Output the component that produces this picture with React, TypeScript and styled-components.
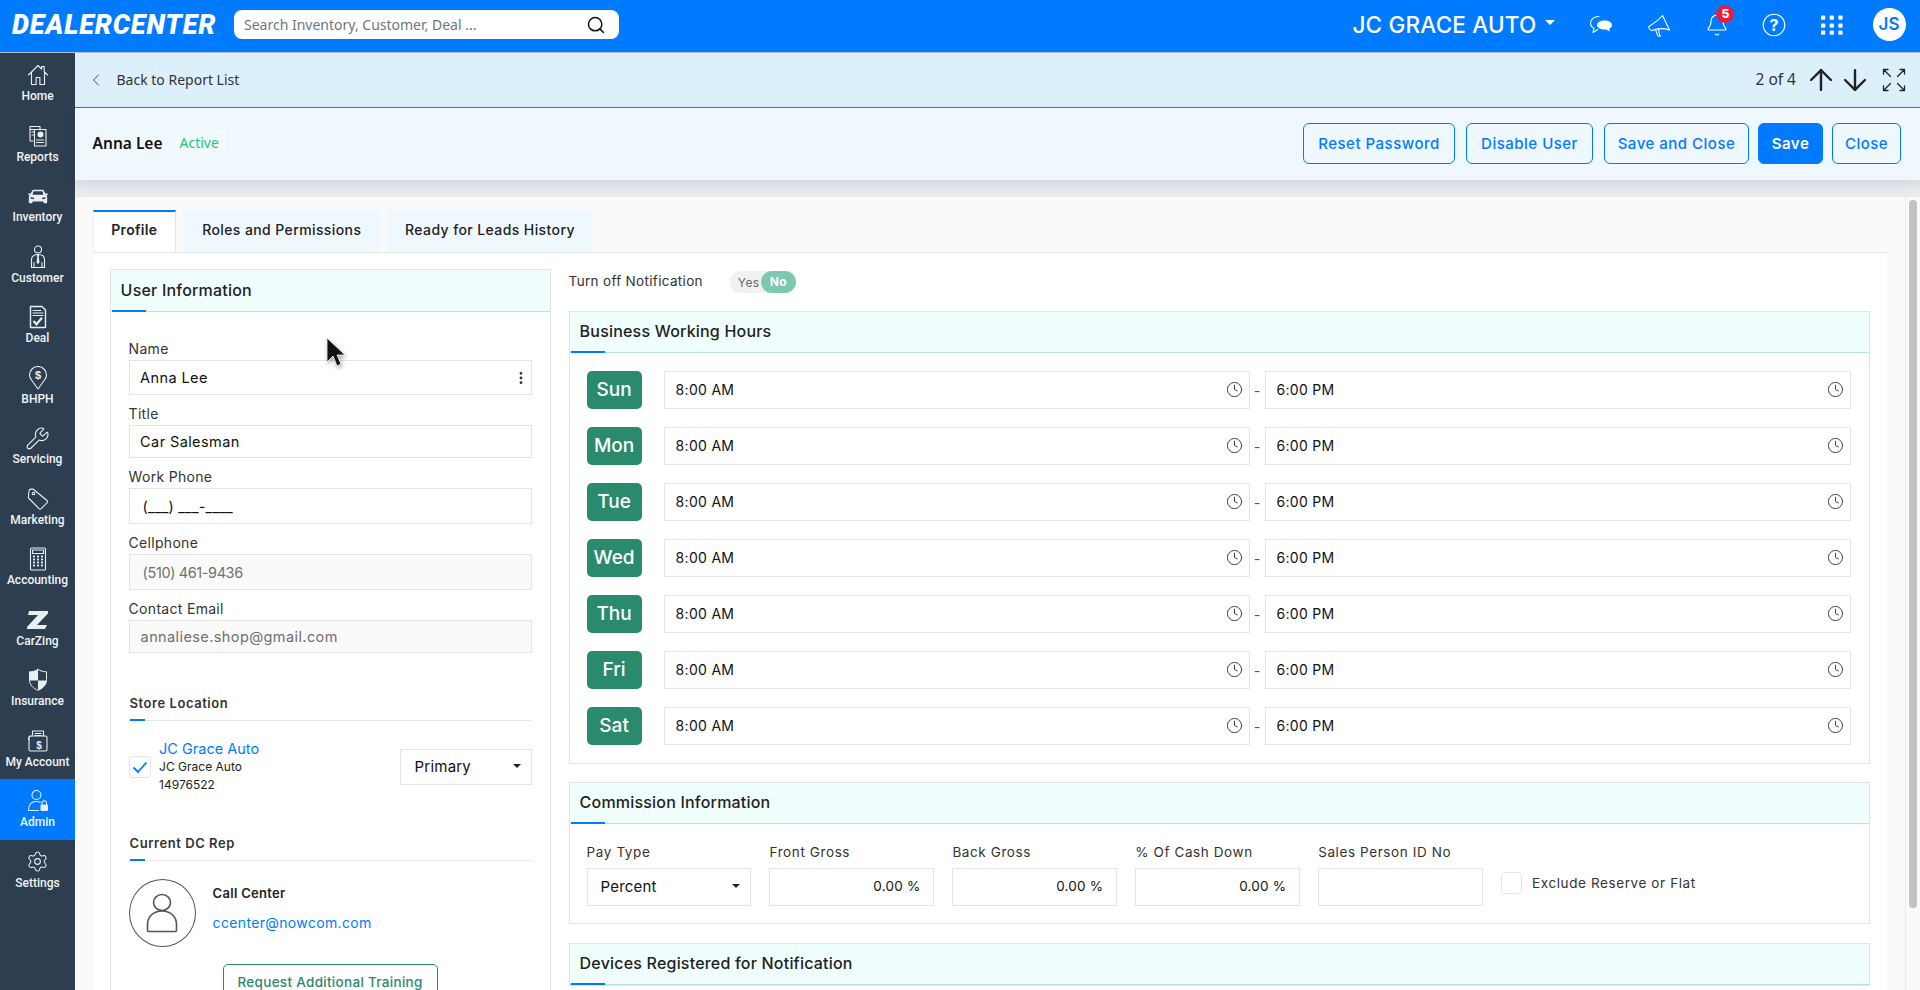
import { FC, ReactNode } from "react";
import styled, { createGlobalStyle } from "styled-components";
import {
  ArrowDown,
  ArrowUp,
  Bell,
  ChevronLeft,
  Clock,
  EllipsisVertical,
  Search,
  Settings,
  Wrench,
} from "lucide-react";

const formFont = `"Inter", "Liberation Sans", sans-serif`;
const textFont = `"Noto Sans", "Open Sans", sans-serif`;

const GlobalStyle = createGlobalStyle`
  html, body { margin: 0; padding: 0; height: 100%; background: #fff; }
  #root { height: 100%; }
  * { box-sizing: border-box; }
`;

const line = { fill: "none", stroke: "currentColor", strokeWidth: 1.1, strokeLinejoin: "round", strokeLinecap: "round" } as const;

const HomeIcon = () => (
  <svg width="24" height="22" viewBox="0 0 24 22">
    <path {...line} d="M2.500 11 12 1.500l3.600 3.600V2.600h2.600v5.100L21.500 11M5.500 8.500V20.500h4.600v-7h3.800v7h4.600V8.500" />
  </svg>
);
const ReportsIcon = () => (
  <svg width="24" height="22" viewBox="0 0 24 22">
    <path {...line} d="M4 1.500h10v3H4zM4 1.500v14.500h3M6 7h3M6 10h2" />
    <path {...line} fill="#2d3e50" d="M8.500 4.500h11.500v16.500h-11.500z" />
    <circle cx="14.500" cy="9.500" r="3" fill="currentColor" />
    <path {...line} d="M10.500 15h7M10.500 17.500h7" />
  </svg>
);
const CarIcon = () => (
  <svg width="22" height="15" viewBox="0 0 24 20" preserveAspectRatio="none">
    <path
      fill="currentColor"
      d="M5.600 2.200C6 1.300 6.800 1 7.600 1h8.800c.8 0 1.600.3 2 1.200L20 6h2c.5 0 .9.500.7 1l-.3 1-1.400.2c.6.600 1 1.300 1 2.300V18c0 .6-.4 1-1 1h-2c-.6 0-1-.4-1-1v-1.500H6V18c0 .6-.4 1-1 1H3c-.6 0-1-.4-1-1v-7.500c0-1 .4-1.700 1-2.300L1.600 8l-.3-1c-.2-.5.2-1 .7-1h2zM7.200 3 6 7.500h12L16.800 3zM4 10.500v2.500l3.500.6V11.500zm16 0-3.500 1v2.100L20 13z"
    />
  </svg>
);
const CustomerIcon = () => (
  <svg width="24" height="24" viewBox="0 0 24 24">
    <circle {...line} cx="12" cy="4.500" r="3.500" />
    <path {...line} d="M5.500 22.500v-8c0-3 2.500-5 6.500-5s6.500 2 6.500 5v8zM8 22.500v-5M16 22.500v-5" />
    <path fill="currentColor" d="M11.300 9.500h1.400l.5 1.500-.5.800.8 5.500-1.500 2-1.500-2 .8-5.500-.5-.8z" />
  </svg>
);
const DealIcon = () => (
  <svg width="24" height="24" viewBox="0 0 24 24">
    <path {...line} strokeWidth={1.4} d="M4.500 1.500h11.500l3.500 3.500v17.500h-15z" />
    <path {...line} d="M7 5.500h8M7 8h10M7 10.500h10" />
    <path fill="none" stroke="currentColor" strokeWidth="2.200" d="m7.500 16 3 3.300 5.500-6.500" />
  </svg>
);
const PinIcon = () => (
  <svg width="24" height="24" viewBox="0 0 24 24">
    <path {...line} d="M12 23 5.500 14C4 12 3.500 10.500 3.500 9a8.500 8.500 0 0 1 17 0c0 1.500-.5 3-2 5z" />
    <text x="12" y="13" textAnchor="middle" fontSize="11" fontWeight="700" fontFamily="Liberation Sans, sans-serif" fill="currentColor">
      $
    </text>
  </svg>
);
const TagIcon = () => (
  <svg width="24" height="24" viewBox="0 0 24 24">
    <path {...line} d="M7 2 21 13.500c.8.7.8 1.500.2 2.200l-6 6c-.7.7-1.500.7-2.200 0L3 11.500c-.5-.5-.7-1-.6-1.700L3 4.200c0-1 .8-2 1.800-2.100z" />
    <circle {...line} cx="7.500" cy="6.500" r="1.300" />
  </svg>
);
const CalcIcon = () => (
  <svg width="24" height="24" viewBox="0 0 24 24">
    <rect {...line} x="4.500" y="1" width="15" height="22" rx="1" />
    <rect {...line} x="6.500" y="3" width="11" height="3.500" />
    {[9.500, 12.500, 15.500, 18.500].map((y) =>
      [8, 12, 16].map((x) => <rect key={`${x}-${y}`} x={x - 1} y={y - 0.900} width="2" height="1.800" fill="currentColor" />)
    )}
  </svg>
);
const ZIcon = () => (
  <svg width="24" height="20" viewBox="0 0 24 20">
    <polygon fill="currentColor" points="3,1 22,1 22,3.500 11,15 21,15 19,19 1,19 1,17 12,5 2,5" />
  </svg>
);
const ShieldIcon = () => (
  <svg width="24" height="24" viewBox="0 0 24 24">
    <path {...line} strokeWidth={1} d="M12 1.500c2.500 1.500 5.500 2.300 8.500 2.300v8c0 5-3.500 8.500-8.500 10.500-5-2-8.500-5.500-8.500-10.500v-8c3 0 6-.8 8.500-2.300z" />
    <path fill="currentColor" d="M12 1.500v11H3.500V3.800c3 0 6-.8 8.500-2.300zM12 12.500h8.500c-.4 4.700-3.800 7.900-8.500 9.800z" />
  </svg>
);
const AccountIcon = () => (
  <svg width="24" height="24" viewBox="0 0 24 24">
    <path {...line} d="M6.500 6V2h11v5M9 4.500h6M9 6.500h6" />
    <rect {...line} x="3" y="7" width="18" height="15" rx="1.500" />
    <path {...line} d="M3 11c-.8-1.500-.5-4 2-4" />
    <text x="13" y="19.500" textAnchor="middle" fontSize="10" fontWeight="700" fontFamily="Liberation Sans, sans-serif" fill="currentColor">
      $
    </text>
  </svg>
);
const AdminIcon = () => (
  <svg width="24" height="24" viewBox="0 0 24 24">
    <circle {...line} cx="10.500" cy="6" r="4.500" />
    <path {...line} d="M2.500 21.500c0-6 3-9 8-9 1.500 0 2.800.3 3.800.8M2.500 21.500h10" />
    <rect x="14.500" y="15.500" width="7.500" height="6.500" rx="1" fill="currentColor" />
    <path {...line} d="M16 15.500V14a2.200 2.200 0 0 1 4.500 0v1.500" />
  </svg>
);
const ChatIcon = () => (
  <svg width="24" height="20" viewBox="0 0 24 20">
    <path {...line} d="M10 1.500C5 1.500 1.500 4.300 1.500 8c0 2.300 1.300 4.200 3.500 5.300L4 17.500l5-3.200" />
    <path fill="currentColor" d="M15.500 5.500c4.300 0 7.500 1.900 7.500 4.600 0 1.600-1.100 3-2.800 3.800l.6 2.600-3.500-2c-5.300.5-9.300-1.500-9.300-4.400 0-2.700 3.200-4.600 7.500-4.600z" />
  </svg>
);
const MegaphoneIcon = () => (
  <svg width="24" height="24" viewBox="0 0 24 24">
    <path {...line} d="M15.500 2.500C13.500 5 9 9 2.500 13c-1 .6-.8 2 0 2.700l1 1.300c.6.7 1.300.6 2 .3C10 15.500 16 15 22.500 17z" />
    <path {...line} d="m8.500 16.500 2 5.500c.3.800 1.500 1.300 3 1l-1-1.500-1-5.500" />
  </svg>
);
const HelpIcon = () => (
  <svg width="24" height="24" viewBox="0 0 24 24">
    <circle {...line} cx="12" cy="12" r="10.800" />
    <text x="12" y="17.500" textAnchor="middle" fontSize="16" fontWeight="700" fontFamily="Inter, sans-serif" fill="currentColor">
      ?
    </text>
  </svg>
);
const GridIcon = () => (
  <svg width="22" height="20" viewBox="0 0 22 20">
    {[0.500, 8.500, 15.500].map((y) =>
      [0, 8.700, 17.400].map((x) => <rect key={`${x}-${y}`} x={x} y={y} width="4.200" height="4.200" rx="1" fill="currentColor" />)
    )}
  </svg>
);
const ExpandIcon = () => (
  <svg width="24" height="24" viewBox="0 0 24 24">
    <path {...line} strokeWidth={1.300} d="M1.500 1.500 8.500 8.500M1.500 6V1.500H6M22.500 1.500 15.500 8.500M22.500 6V1.500H18M1.500 22.500 8.500 15.500M1.500 18v4.500H6M22.500 22.500 15.500 15.500M22.500 18v4.500H18" />
  </svg>
);
const PersonIcon = () => (
  <svg width="34" height="42" viewBox="0 0 34 42">
    <ellipse cx="17" cy="10.500" rx="8.500" ry="8" fill="none" stroke="#555" strokeWidth="1.600" />
    <path fill="none" stroke="#555" strokeWidth="1.600" strokeLinejoin="round" d="M2.500 38.500v-6c0-8 6-13.500 14.500-13.500s14.500 5.500 14.500 13.500v6c0 .5-.5 1-1 1h-27c-.5 0-1-.5-1-1z" />
  </svg>
);

const Page = styled.div`
  position: relative;
  display: flex;
  flex-direction: column;
  width: 100%;
  height: 100vh;
  overflow: hidden;
  font-family: ${formFont};
  color: #222;
`;

const TopBar = styled.header`
  flex: 0 0 53px;
  display: flex;
  align-items: center;
  padding-bottom: 3px;
  background: #007bff;
  border-bottom: 1px solid #b4bec8;
  color: #fff;
`;

const Logo = styled.div`
  flex: 0 0 204px;
  min-width: 0;
  margin-left: 12px;
  font-family: "Roboto", sans-serif;
  font-size: 27px;
  font-weight: 900;
  font-style: italic;
  letter-spacing: 0.900px;
  white-space: nowrap;
`;

const SearchBox = styled.div`
  display: flex;
  align-items: center;
  justify-content: space-between;
  width: 385px;
  height: 29px;
  margin-left: 18px;
  padding: 0 13px 0 10px;
  border-radius: 8px;
  background: #fff;
  font-family: ${textFont};
  font-size: 14px;
  color: #6c7780;
`;

const StoreSwitch = styled.div`
  display: flex;
  align-items: center;
  margin-left: auto;
  font-size: 22.500px;
  font-weight: 500;
  letter-spacing: 0.200px;
  white-space: nowrap;
`;

const Caret = styled.span<{ $size?: number; $color?: string }>`
  display: inline-block;
  width: 0;
  height: 0;
  border-left: ${(p) => p.$size ?? 5}px solid transparent;
  border-right: ${(p) => p.$size ?? 5}px solid transparent;
  border-top: ${(p) => p.$size ?? 5}px solid ${(p) => p.$color ?? "#fff"};
`;

const StoreCaret = styled(Caret)`
  margin: 0 18px 4px 8px;
`;

const TopIcon = styled.div`
  position: relative;
  flex: 0 0 57.600px;
  display: flex;
  align-items: center;
  justify-content: center;
`;

const Badge = styled.span`
  position: absolute;
  top: -8px;
  right: 11px;
  width: 18px;
  height: 18px;
  border-radius: 50%;
  background: #ee1c3c;
  font-size: 12px;
  font-weight: 800;
  line-height: 18px;
  text-align: center;
  color: #fff;
`;

const UserBadge = styled.div`
  flex: 0 0 33px;
  height: 33px;
  margin: 0 14.500px 0 12px;
  border-radius: 50%;
  background: #fff;
  font-size: 17px;
  font-weight: 600;
  line-height: 33px;
  text-align: center;
  color: #007bff;
`;

const Body = styled.div`
  flex: 1;
  display: flex;
  min-height: 0;
`;

const Sidebar = styled.nav`
  flex: 0 0 75px;
  background: #2d3e50;
`;

const NavItem = styled.div<{ $active?: boolean }>`
  display: flex;
  flex-direction: column;
  align-items: center;
  height: 60.500px;
  padding-top: 10px;
  background: ${(p) => (p.$active ? "#007bff" : "transparent")};
  color: #e9eef2;
`;

const NavIcon = styled.div`
  display: flex;
  align-items: center;
  justify-content: center;
  height: 24px;
`;

const NavLabel = styled.span`
  margin-top: 2px;
  font-family: "Roboto", sans-serif;
  font-size: 12px;
  font-weight: 500;
  line-height: 14px;
  white-space: nowrap;
  color: #f1f4f6;
`;

const Main = styled.main`
  flex: 1;
  display: flex;
  flex-direction: column;
  min-width: 0;
  background: #e9ecef;
`;

const SubBar = styled.div`
  flex: 0 0 55px;
  display: flex;
  align-items: center;
  padding: 0 12px 0 11px;
  background: #dcf0fc;
  border-bottom: 1px solid #1e80e6;
  font-family: ${textFont};
  font-size: 14px;
  color: #333;
`;

const BackLabel = styled.span`
  margin: 0 0 2px 10.500px;
`;

const Pager = styled.span`
  margin: 0 8px 2px auto;
  font-size: 15.500px;
`;

const PagerButton = styled.span`
  display: flex;
  width: 34px;
  justify-content: center;
  color: #222;
`;

const ExpandButton = styled(PagerButton)`
  margin-left: 8px;
  width: 28px;
`;

const DetailHead = styled.div`
  position: relative;
  z-index: 1;
  flex: 0 0 72px;
  display: flex;
  align-items: center;
  padding: 0 19px 1px 17.600px;
  background: #f0f8ff;
  box-shadow: 0 4px 10px rgba(40, 50, 60, 0.12);
`;

const PersonName = styled.span`
  margin-bottom: 2px;
  font-family: ${textFont};
  font-size: 15.500px;
  font-weight: 600;
  color: #111;
`;

const Status = styled.span`
  margin: 0 0 2px 10px;
  padding: 3px 7px;
  border-radius: 3px;
  background: #f2fbf9;
  font-family: ${textFont};
  font-size: 14px;
  color: #1cc67c;
`;

const Actions = styled.div`
  display: flex;
  margin-left: auto;
`;

const ActionButton = styled.button<{ $w: number; $ml?: number; $primary?: boolean }>`
  width: ${(p) => p.$w}px;
  height: 41px;
  margin-left: ${(p) => p.$ml ?? 0}px;
  padding: 0;
  border: 1px solid #007bff;
  border-radius: 6px;
  background: ${(p) => (p.$primary ? "#007bff" : "transparent")};
  font-family: ${formFont};
  font-size: 15px;
  font-weight: ${(p) => (p.$primary ? 600 : 500)};
  letter-spacing: 0.500px;
  color: ${(p) => (p.$primary ? "#fff" : "#007bff")};
`;

const ContentArea = styled.div`
  flex: 1;
  display: flex;
  min-height: 0;
  margin-top: 17px;
`;

const ContentBody = styled.div`
  flex: 1;
  display: flex;
  flex-direction: column;
  min-width: 0;
  padding: 13px 18px 0 17.600px;
  background: #fafafa;
`;

const ScrollTrack = styled.div`
  flex: 0 0 15px;
  padding: 3px 3px 0 3.500px;
  background: #fafafa;
  border-left: 1px solid #e8e8e8;
`;

const ScrollThumb = styled.div`
  width: 8px;
  height: 708px;
  border-radius: 4px;
  background: #c2c2c2;
`;

const Tabs = styled.div`
  flex: 0 0 42px;
  display: flex;
  gap: 7px;
  border-bottom: 1px solid #e0e5e9;
`;

const TabItem = styled.div<{ $active?: boolean; $w: number }>`
  flex: 0 0 ${(p) => p.$w}px;
  height: ${(p) => (p.$active ? "42px" : "41px")};
  border-top: 2px solid ${(p) => (p.$active ? "#007bff" : "#f0f8ff")};
  border-left: ${(p) => (p.$active ? "1px solid #eef0f2" : "none")};
  border-right: ${(p) => (p.$active ? "1px solid #e0e5e9" : "none")};
  background: ${(p) => (p.$active ? "#fff" : "#f0f8ff")};
  font-size: 14px;
  font-weight: ${(p) => (p.$active ? 600 : 500)};
  letter-spacing: ${(p) => (p.$active ? 0.3 : 0.4)}px;
  line-height: 36px;
  text-align: center;
  color: #222;
`;

const TabPanel = styled.div`
  flex: 1;
  display: flex;
  gap: 18px;
  min-height: 0;
  padding: 16px 17px 0;
  background: #fff;
`;

const LeftColumn = styled.div`
  flex: 0 0 441px;
`;

const RightColumn = styled.div`
  flex: 1;
  min-width: 0;
`;

const Panel = styled.section<{ $gap?: number }>`
  margin-top: ${(p) => p.$gap ?? 0}px;
  border: 1px solid #dfe5e8;
`;

const PanelHead = styled.div<{ $h?: number }>`
  position: relative;
  height: ${(p) => p.$h ?? 41}px;
  padding-left: 10px;
  background: #f0fffd;
  border-bottom: 1px solid #b5e6dc;
  font-size: 16px;
  font-weight: 500;
  letter-spacing: 0.200px;
  line-height: ${(p) => (p.$h ?? 41) - 2}px;
  color: #222;

  &::after {
    content: "";
    position: absolute;
    left: 1px;
    bottom: -1px;
    width: 34px;
    height: 2px;
    background: #007bff;
  }
`;

const UserBody = styled.div`
  padding: 18px 18px 0;
`;

const Field = styled.div`
  margin-top: 10px;
`;

const FieldLabel = styled.div`
  height: 18px;
  margin-bottom: 2px;
  font-size: 14px;
  letter-spacing: 0.300px;
  line-height: 18px;
  color: #333;
`;

const TextBox = styled.div<{ $h: number; $muted?: boolean; $indent?: number; $spacing?: number }>`
  display: flex;
  align-items: center;
  justify-content: space-between;
  height: ${(p) => p.$h}px;
  padding: 0 2px 0 ${(p) => p.$indent ?? 10.500}px;
  border: 1px solid #e2e4e6;
  background: ${(p) => (p.$muted ? "#fafafa" : "#fff")};
  font-size: 14.500px;
  letter-spacing: ${(p) => p.$spacing ?? 0.4}px;
  color: ${(p) => (p.$muted ? "#707070" : "#111")};
`;

const SectionTitle = styled.div<{ $gap: number }>`
  position: relative;
  height: 27px;
  margin-top: ${(p) => p.$gap}px;
  padding: 0 0 8px 1px;
  border-bottom: 1px solid #e6e8ea;
  font-size: 13px;
  font-weight: 600;
  line-height: 18px;
  letter-spacing: 0.550px;
  color: #333;

  &::after {
    content: "";
    position: absolute;
    left: 1px;
    bottom: -1px;
    width: 15px;
    height: 2px;
    background: #007bff;
  }
`;

const StoreRow = styled.div`
  display: flex;
  align-items: center;
  padding-top: 19px;
`;

const CheckBox = styled.span<{ $w?: number }>`
  flex: 0 0 ${(p) => p.$w ?? 22}px;
  display: flex;
  align-items: center;
  justify-content: center;
  height: 22px;
  border: 1px solid #e2e4e6;
  border-radius: 4px;
  background: #fff;
`;

const StoreText = styled.div`
  margin-left: 8.500px;
  font-size: 12px;
  line-height: 18px;
  color: #222;
`;

const StoreName = styled.div`
  font-size: 14.500px;
  color: #007bff;
`;

const SelectBox = styled.div<{ $w?: number; $h: number; $indent: number; $arrow: number }>`
  display: flex;
  flex: ${(p) => (p.$w ? `0 0 ${p.$w}px` : "none")};
  align-items: center;
  justify-content: space-between;
  height: ${(p) => p.$h}px;
  margin-left: ${(p) => (p.$w ? "auto" : "0")};
  padding: 0 ${(p) => p.$arrow}px 2px ${(p) => p.$indent}px;
  border: 1px solid #e2e4e6;
  background: #fff;
  font-size: 15px;
  letter-spacing: 0.200px;
  color: #111;
`;

const RepRow = styled.div`
  display: flex;
  gap: 17px;
  padding-top: 18px;
`;

const RepAvatar = styled.div`
  flex: 0 0 67px;
  display: flex;
  align-items: center;
  justify-content: center;
  height: 68px;
  border: 1px solid #555;
  border-radius: 50%;
`;

const RepText = styled.div`
  padding-top: 5px;
`;

const RepName = styled.div`
  height: 18px;
  font-size: 13px;
  font-weight: 600;
  letter-spacing: 0.300px;
  line-height: 18px;
  color: #222;
`;

const RepMail = styled.div`
  margin-top: 12px;
  font-size: 14px;
  line-height: 18px;
  letter-spacing: 0.350px;
  color: #007bff;
`;

const TrainingButton = styled.button`
  display: block;
  width: 215px;
  height: 36px;
  margin: 17px auto 0;
  padding: 0;
  border: 1px solid #2a8a6e;
  border-radius: 5px;
  background: #fff;
  font-family: ${formFont};
  font-size: 13.500px;
  font-weight: 500;
  letter-spacing: 0.300px;
  color: #2a8a6e;
`;

const NoticeRow = styled.div`
  display: flex;
  align-items: center;
  height: 22px;
  margin: 2px 0 18px;
  font-size: 13.500px;
  letter-spacing: 0.320px;
  color: #333;
`;

const NoticeLabel = styled.span`
  margin-bottom: 2px;
`;

const Toggle = styled.div`
  display: flex;
  align-items: center;
  justify-content: space-between;
  width: 66px;
  height: 22px;
  margin-left: 27px;
  padding-left: 8px;
  border-radius: 11px;
  background: #f1f1f1;
  font-size: 12px;
  color: #666;
`;

const ToggleOn = styled.span`
  width: 35px;
  border-radius: 11px;
  background: #7cc8b0;
  font-weight: 700;
  line-height: 22px;
  text-align: center;
  color: #fff;
`;

const HoursBody = styled.div`
  display: flex;
  flex-direction: column;
  gap: 18px;
  padding: 18px 18px 18px 17px;
`;

const HoursRow = styled.div`
  display: flex;
  align-items: center;
`;

const DayBadge = styled.span`
  flex: 0 0 55px;
  height: 38px;
  margin-right: 22px;
  border-radius: 5px;
  background: #2a8a6e;
  font-size: 19px;
  font-weight: 500;
  line-height: 38px;
  text-align: center;
  color: #fff;
`;

const TimeBox = styled.div`
  flex: 1;
  display: flex;
  align-items: center;
  justify-content: space-between;
  height: 38px;
  padding: 0 6px 2px 11px;
  border: 1px solid #e2e4e6;
  font-size: 14px;
  letter-spacing: 0.300px;
  color: #111;
`;

const Dash = styled.span`
  flex: 0 0 15px;
  font-size: 14px;
  text-align: center;
  color: #555;
`;

const CommissionBody = styled.div`
  display: flex;
  gap: 18px;
  padding: 19px 17px 17px;
`;

const CommissionField = styled.div`
  flex: 0 0 164.900px;
`;

const CommissionLabel = styled.div`
  height: 18px;
  margin-bottom: 7px;
  font-size: 13.500px;
  letter-spacing: 0.600px;
  line-height: 18px;
  color: #333;
`;

const AmountBox = styled.div`
  height: 38px;
  padding-right: 13px;
  border: 1px solid #e2e4e6;
  font-size: 13.500px;
  letter-spacing: 0.200px;
  line-height: 34px;
  text-align: right;
  color: #111;
`;

const ExcludeRow = styled.div`
  display: flex;
  align-self: flex-end;
  height: 38px;
  padding-top: 4px;
  font-size: 13.500px;
  letter-spacing: 0.600px;
  line-height: 22px;
  white-space: nowrap;
  color: #333;
`;

const ExcludeLabel = styled.span`
  margin-left: 10px;
`;

const Cursor = styled.svg`
  position: absolute;
  left: 326px;
  top: 337px;
  filter: drop-shadow(1px 2px 2px rgba(0, 0, 0, 0.35));
`;

const navItems: { label: string; icon: ReactNode; active?: boolean }[] = [
  { label: "Home", icon: <HomeIcon /> },
  { label: "Reports", icon: <ReportsIcon /> },
  { label: "Inventory", icon: <CarIcon /> },
  { label: "Customer", icon: <CustomerIcon /> },
  { label: "Deal", icon: <DealIcon /> },
  { label: "BHPH", icon: <PinIcon /> },
  { label: "Servicing", icon: <Wrench size={25} strokeWidth={1.1} /> },
  { label: "Marketing", icon: <TagIcon /> },
  { label: "Accounting", icon: <CalcIcon /> },
  { label: "CarZing", icon: <ZIcon /> },
  { label: "Insurance", icon: <ShieldIcon /> },
  { label: "My Account", icon: <AccountIcon /> },
  { label: "Admin", icon: <AdminIcon />, active: true },
  { label: "Settings", icon: <Settings size={23} strokeWidth={1.1} /> },
];

const days = ["Sun", "Mon", "Tue", "Wed", "Thu", "Fri", "Sat"];

const TimeField: FC<{ value: string }> = ({ value }) => (
  <TimeBox>
    {value}
    <Clock size={17} strokeWidth={1.2} color="#222" />
  </TimeBox>
);

const App: FC = () => {
  return (
    <Page>
      <GlobalStyle />
      <TopBar>
        <Logo>DEALERCENTER</Logo>
        <SearchBox>
          Search Inventory, Customer, Deal ...
          <Search size={20} strokeWidth={1.8} color="#111" />
        </SearchBox>
        <StoreSwitch>
          JC GRACE AUTO
          <StoreCaret />
        </StoreSwitch>
        <TopIcon>
          <ChatIcon />
        </TopIcon>
        <TopIcon>
          <MegaphoneIcon />
        </TopIcon>
        <TopIcon>
          <Bell size={24} strokeWidth={1.1} />
          <Badge>5</Badge>
        </TopIcon>
        <TopIcon>
          <HelpIcon />
        </TopIcon>
        <TopIcon>
          <GridIcon />
        </TopIcon>
        <UserBadge>JS</UserBadge>
      </TopBar>
      <Body>
        <Sidebar>
          {navItems.map((item) => (
            <NavItem key={item.label} $active={item.active}>
              <NavIcon>{item.icon}</NavIcon>
              <NavLabel>{item.label}</NavLabel>
            </NavItem>
          ))}
        </Sidebar>
        <Main>
          <SubBar>
            <ChevronLeft size={20} strokeWidth={1.1} color="#333" />
            <BackLabel>Back to Report List</BackLabel>
            <Pager>2 of 4</Pager>
            <PagerButton>
              <ArrowUp size={34} strokeWidth={1.700} />
            </PagerButton>
            <PagerButton>
              <ArrowDown size={34} strokeWidth={1.700} />
            </PagerButton>
            <ExpandButton>
              <ExpandIcon />
            </ExpandButton>
          </SubBar>
          <DetailHead>
            <PersonName>Anna Lee</PersonName>
            <Status>Active</Status>
            <Actions>
              <ActionButton $w={152}>Reset Password</ActionButton>
              <ActionButton $w={127} $ml={11}>
                Disable User
              </ActionButton>
              <ActionButton $w={145} $ml={11}>
                Save and Close
              </ActionButton>
              <ActionButton $w={65} $ml={9} $primary>
                Save
              </ActionButton>
              <ActionButton $w={69} $ml={9}>
                Close
              </ActionButton>
            </Actions>
          </DetailHead>
          <ContentArea>
            <ContentBody>
              <Tabs>
                <TabItem $active $w={83.400}>
                  Profile
                </TabItem>
                <TabItem $w={197.500}>Roles and Permissions</TabItem>
                <TabItem $w={205}>Ready for Leads History</TabItem>
              </Tabs>
              <TabPanel>
                <LeftColumn>
                  <Panel>
                    <PanelHead $h={42}>User Information</PanelHead>
                    <UserBody>
                      <Field>
                        <FieldLabel>Name</FieldLabel>
                        <TextBox $h={35}>
                          Anna Lee
                          <EllipsisVertical size={16} strokeWidth={2.200} color="#333" />
                        </TextBox>
                      </Field>
                      <Field>
                        <FieldLabel>Title</FieldLabel>
                        <TextBox $h={33}>Car Salesman</TextBox>
                      </Field>
                      <Field>
                        <FieldLabel>Work Phone</FieldLabel>
                        <TextBox $h={36} $indent={13} $spacing={0.2}>
                          (___) ___-____
                        </TextBox>
                      </Field>
                      <Field>
                        <FieldLabel>Cellphone</FieldLabel>
                        <TextBox $h={36} $muted $indent={13} $spacing={-0.4}>
                          (510) 461-9436
                        </TextBox>
                      </Field>
                      <Field>
                        <FieldLabel>Contact Email</FieldLabel>
                        <TextBox $h={33} $muted $indent={11} $spacing={0.4}>
                          annaliese.shop@gmail.com
                        </TextBox>
                      </Field>
                      <SectionTitle $gap={41}>Store Location</SectionTitle>
                      <StoreRow>
                        <CheckBox>
                          <svg width="16" height="13" viewBox="0 0 16 13">
                            <path d="m1.500 6.500 4.500 4.500 8.500-9.500" fill="none" stroke="#007bff" strokeWidth="1.800" />
                          </svg>
                        </CheckBox>
                        <StoreText>
                          <StoreName>JC Grace Auto</StoreName>
                          <div>JC Grace Auto</div>
                          <div>14976522</div>
                        </StoreText>
                        <SelectBox $w={132} $h={36} $indent={14} $arrow={10}>
                          Primary
                          <Caret $size={4.500} $color="#222" />
                        </SelectBox>
                      </StoreRow>
                      <SectionTitle $gap={40}>Current DC Rep</SectionTitle>
                      <RepRow>
                        <RepAvatar>
                          <PersonIcon />
                        </RepAvatar>
                        <RepText>
                          <RepName>Call Center</RepName>
                          <RepMail>ccenter@nowcom.com</RepMail>
                        </RepText>
                      </RepRow>
                      <TrainingButton>Request Additional Training</TrainingButton>
                    </UserBody>
                  </Panel>
                </LeftColumn>
                <RightColumn>
                  <NoticeRow>
                    <NoticeLabel>Turn off Notification</NoticeLabel>
                    <Toggle>
                      Yes
                      <ToggleOn>No</ToggleOn>
                    </Toggle>
                  </NoticeRow>
                  <Panel>
                    <PanelHead>Business Working Hours</PanelHead>
                    <HoursBody>
                      {days.map((day) => (
                        <HoursRow key={day}>
                          <DayBadge>{day}</DayBadge>
                          <TimeField value="8:00 AM" />
                          <Dash>-</Dash>
                          <TimeField value="6:00 PM" />
                        </HoursRow>
                      ))}
                    </HoursBody>
                  </Panel>
                  <Panel $gap={18}>
                    <PanelHead>Commission Information</PanelHead>
                    <CommissionBody>
                      <CommissionField>
                        <CommissionLabel>Pay Type</CommissionLabel>
                        <SelectBox $h={38} $indent={13} $arrow={10}>
                          Percent
                          <Caret $size={4} $color="#222" />
                        </SelectBox>
                      </CommissionField>
                      <CommissionField>
                        <CommissionLabel>Front Gross</CommissionLabel>
                        <AmountBox>0.00 %</AmountBox>
                      </CommissionField>
                      <CommissionField>
                        <CommissionLabel>Back Gross</CommissionLabel>
                        <AmountBox>0.00 %</AmountBox>
                      </CommissionField>
                      <CommissionField>
                        <CommissionLabel>% Of Cash Down</CommissionLabel>
                        <AmountBox>0.00 %</AmountBox>
                      </CommissionField>
                      <CommissionField>
                        <CommissionLabel>Sales Person ID No</CommissionLabel>
                        <AmountBox />
                      </CommissionField>
                      <ExcludeRow>
                        <CheckBox $w={21} />
                        <ExcludeLabel>Exclude Reserve or Flat</ExcludeLabel>
                      </ExcludeRow>
                    </CommissionBody>
                  </Panel>
                  <Panel $gap={19}>
                    <PanelHead>Devices Registered for Notification</PanelHead>
                  </Panel>
                </RightColumn>
              </TabPanel>
            </ContentBody>
            <ScrollTrack>
              <ScrollThumb />
            </ScrollTrack>
          </ContentArea>
        </Main>
      </Body>
      <Cursor width="20" height="32" viewBox="0 0 20 32">
        <path d="M1 1v24l6-6 4 10 4-2-4-9h8z" fill="#111" stroke="#fff" strokeWidth="0.800" />
      </Cursor>
    </Page>
  );
};

export default App;
